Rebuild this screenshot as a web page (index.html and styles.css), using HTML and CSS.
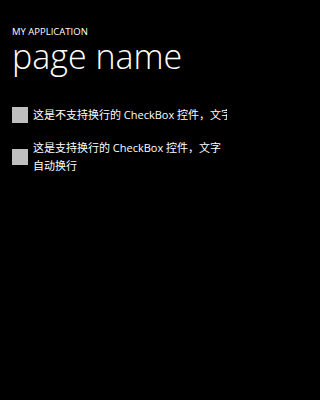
FILE: index.html
```html
<!DOCTYPE html>
<html>
<head>
<meta charset="utf-8">
<link rel="stylesheet" href="styles.css">
</head>
<body>
<div class="page">
  <div class="header">
    <div class="app-title">MY APPLICATION</div>
    <div class="page-title">page name</div>
  </div>
  <div class="content">
    <div class="check nowrap">
      <span class="box"></span>
      <span class="label">这是不支持换行的 CheckBox 控件，文字不会自动换行</span>
    </div>
    <div class="check wrap">
      <span class="box"></span>
      <span class="label">这是支持换行的 CheckBox 控件，文字自动换行</span>
    </div>
  </div>
</div>
</body>
</html>
```
FILE: styles.css
```css
html, body {
  margin: 0;
  padding: 0;
  background: #000;
}
.page {
  width: 240px;
  height: 400px;
  overflow: hidden;
  color: #fff;
  font-family: "Open Sans", "Noto Sans CJK SC", sans-serif;
}
.header {
  padding: 27px 0 0 12px;
}
.app-title {
  font-size: 9.5px;
  line-height: 10px;
}
.page-title {
  margin-top: 1px;
  font-size: 34px;
  font-weight: 300;
  line-height: 36px;
}
.content {
  padding: 32px 12px 0 12px;
  display: flex;
  flex-direction: column;
  gap: 15px;
}
.check {
  display: flex;
  align-items: center;
  gap: 5px;
}
.box {
  flex: none;
  width: 16px;
  height: 16px;
  background: #bfbfbf;
}
.label {
  width: 194px;
  font-size: 11px;
  line-height: 18px;
}
.nowrap .label {
  white-space: nowrap;
  overflow: hidden;
}
```
